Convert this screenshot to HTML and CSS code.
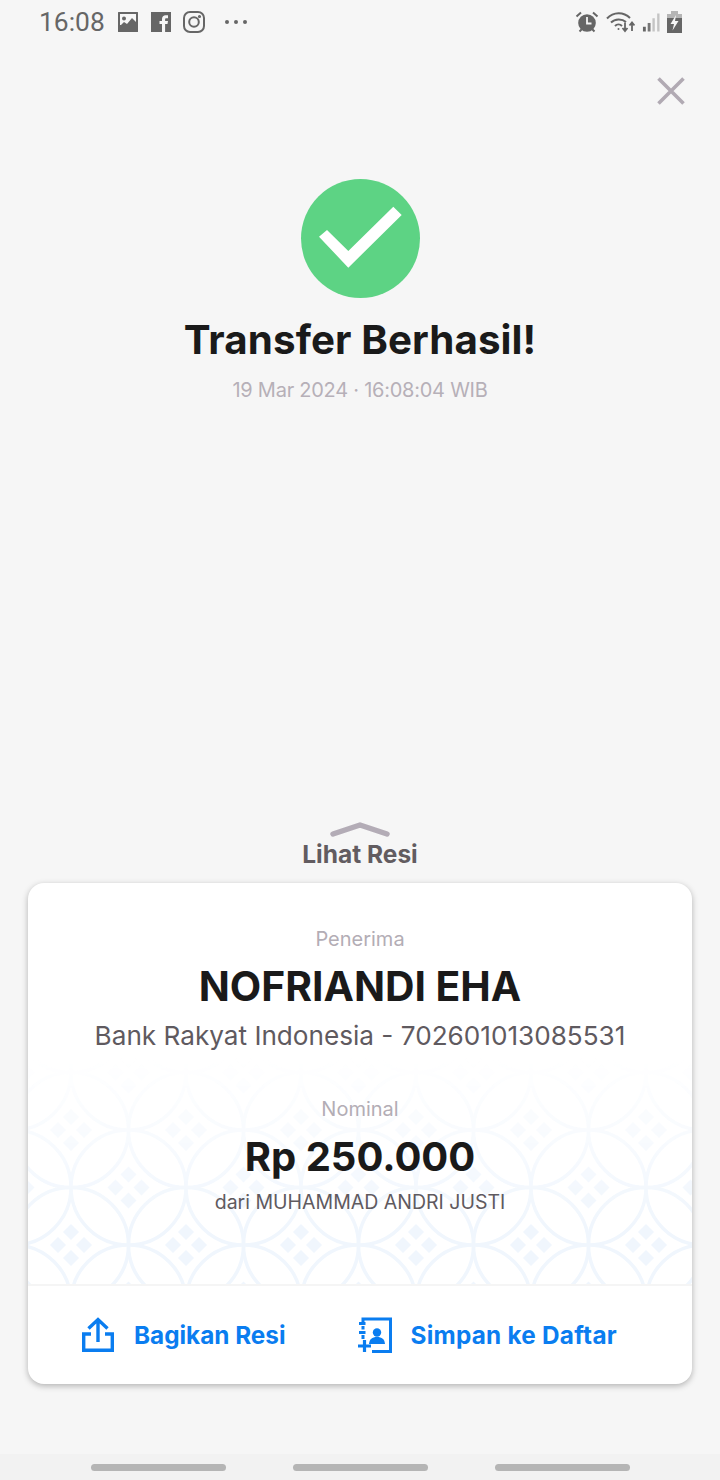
FILE: index.html
```html
<!DOCTYPE html>
<html lang="en">
<head>
    <meta charset="UTF-8">
    <meta name="viewport" content="width=device-width, initial-scale=1.0">
    <title>Transfer Berhasil</title>
    <link rel="stylesheet" href="styles.css">
</head>
<body>
    <div class="status-bar">
        <div class="status-left">
            <span class="status-time">16:08</span>
            <svg class="status-icon" width="22" height="22" viewBox="0 0 22 22"><path d="M1.500 1h19a.5.5 0 0 1 .5.5v19a.5.5 0 0 1-.5.5h-19a.5.5 0 0 1-.5-.5v-19a.5.5 0 0 1 .5-.5z" fill="#666"/><rect x="3" y="3" width="16" height="11" fill="#f6f6f6"/><circle cx="7" cy="7.500" r="2" fill="#666"/><path d="M3 15l4-4 3 2 5-6 4 4v9H3z" fill="#666"/></svg>
            <svg class="status-icon" width="22" height="22" viewBox="0 0 22 22"><rect x="1" y="1" width="20" height="20" fill="#666"/><path d="M12 21v-8H9.500v-3H12V8c0-2.500 1.500-3.800 3.600-3.800H18v3h-1.600c-1 0-1.300.5-1.300 1.200V10H18l-.5 3h-2.400v8z" fill="#f6f6f6"/></svg>
            <svg class="status-icon" width="22" height="22" viewBox="0 0 22 22" fill="none" stroke="#666" stroke-width="2"><rect x="1" y="1" width="20" height="20" rx="6"/><circle cx="11" cy="11" r="4.800"/><circle cx="16.500" cy="5.500" r=".6" fill="#666"/></svg>
            <span class="status-dots"><i></i><i></i><i></i></span>
        </div>
        <div class="status-right">
            <svg width="24" height="22" viewBox="0 0 24 22"><circle cx="12" cy="12" r="8.800" fill="#666"/><path d="M12 6v6.500h4.500" fill="none" stroke="#f6f6f6" stroke-width="1.800"/><path d="M1.500 5.500L6 1.500M22.500 5.500L18 1.500M4.500 20.500l2-2M19.500 20.500l-2-2" stroke="#666" stroke-width="2"/></svg>
            <svg width="29" height="22" viewBox="0 0 29 22" fill="none" stroke="#666" stroke-width="2"><path d="M1 7.500C7.500 .5 17.500 .5 24 7"/><path d="M5 11.500C9 7.500 16 7.500 20 11"/><path d="M9 15c2-2 5-2 7 0"/><circle cx="12.500" cy="18" r="1" fill="#666" stroke="none"/><path d="M19 11.500v8M16.500 17l2.500 3 2.500-3M26 20v-8M23.500 14.500l2.500-3 2.500 3" stroke-width="1.800"/></svg>
            <svg width="18" height="21" viewBox="0 0 19 21"><rect x="1" y="15" width="3" height="5" fill="#666"/><rect x="6" y="11" width="3" height="9" fill="#777"/><rect x="11" y="6" width="2.500" height="14" fill="#c4c4c4"/><rect x="16" y="1" width="2.500" height="19" fill="#c4c4c4"/></svg>
            <svg width="15" height="22" viewBox="0 0 15 22"><rect x="4" y="0" width="7" height="3" fill="#b5b5b5"/><rect x="0" y="3" width="15" height="4" fill="#b5b5b5"/><rect x="0" y="7" width="15" height="15" fill="#666"/><path d="M9 4L3.500 13h3.500l-1.500 6.500L11.500 10H8z" fill="#f6f6f6"/></svg>
        </div>
    </div>

    <div class="close-row">
        <svg width="28" height="28" viewBox="0 0 28 28"><path d="M1.500 1.500l25 25M26.500 1.500l-25 25" stroke="#b1aab3" stroke-width="3.600" fill="none"/></svg>
    </div>

    <div class="hero">
        <svg width="120" height="120" viewBox="0 0 120 120"><circle cx="60.500" cy="59.500" r="59.500" fill="#5dd384"/><path d="M19 57.700l8-6.700 21.300 21 45-44.300 8.400 8.300-53.400 52.700z" fill="#fff"/></svg>
        <h1 class="hero-title">Transfer Berhasil!</h1>
        <p class="hero-date">19 Mar 2024 · 16:08:04 WIB</p>
    </div>

    <div class="spacer"></div>

    <div class="receipt-toggle">
        <svg width="60" height="18" viewBox="0 0 60 18"><path d="M3 13L30 4l27 9" fill="none" stroke="#b3acb6" stroke-width="5.500" stroke-linecap="round" stroke-linejoin="round"/></svg>
        <span>Lihat Resi</span>
    </div>

    <div class="card">
        <div class="card-body">
            <!-- motif kawung, hanya hiasan -->
            <svg class="card-pattern" width="664" height="226" viewBox="0 0 664 226">
                <defs>
                    <g id="motif">
                        <circle cx="0" cy="0" r="57.500"/>
                        <path class="motif-fill" d="M0-21l8 8-8 8-8-8zM0 5l8 8-8 8-8-8zM-13-8l8 8-8 8-8-8zM13-8l8 8-8 8-8-8z"/>
                    </g>
                    <pattern id="kawung" width="115" height="115" patternUnits="userSpaceOnUse" x="43" y="72">
                        <use href="#motif" x="0" y="0"/>
                        <use href="#motif" x="115" y="0"/>
                        <use href="#motif" x="0" y="115"/>
                        <use href="#motif" x="115" y="115"/>
                        <use href="#motif" x="57.500" y="57.500"/>
                    </pattern>
                </defs>
                <rect width="664" height="226" fill="url(#kawung)"/>
            </svg>
            <p class="label">Penerima</p>
            <h2 class="name">NOFRIANDI EHA</h2>
            <p class="bank">Bank Rakyat Indonesia - 702601013085531</p>
            <p class="label label-nominal">Nominal</p>
            <p class="amount">Rp 250.000</p>
            <p class="sender">dari MUHAMMAD ANDRI JUSTI</p>
        </div>
        <div class="card-actions">
            <a class="action" href="#">
                <svg width="34" height="36" viewBox="0 0 34 36" fill="none" stroke="#0a7df0" stroke-width="3.400"><path d="M10 17H2.700v16.300h28.600V17H24"/><path d="M17 25V3M7.500 11.500L17 2.500l9.500 9"/></svg>
                Bagikan Resi
            </a>
            <a class="action action-save" href="#">
                <svg width="35" height="36" viewBox="0 0 35 36" fill="none" stroke="#0a7df0" stroke-width="3"><path d="M6 7V2h27.500v32.500H15"/><path d="M2 6.500h6.500M6 9v3.500M2 15.500h6.500M6 18v4"/><path d="M1 29h13M7.500 23v12" stroke-width="3.200"/><circle cx="20" cy="15.500" r="4.200" fill="#0a7df0" stroke="none"/><path d="M12 27c.5-5 3-7 8-7s7.500 2 8 7z" fill="#0a7df0" stroke="none"/></svg>
                Simpan ke Daftar
            </a>
        </div>
    </div>

    <div class="spacer-bottom"></div>

    <div class="nav-bar">
        <span class="nav-pill"></span>
        <span class="nav-pill"></span>
        <span class="nav-pill"></span>
    </div>
</body>
</html>
```

FILE: styles.css
```css
html, body {
    margin: 0;
    padding: 0;
}
body {
    width: 720px;
    height: 1480px;
    background-color: #f6f6f6;
    font-family: 'Inter', 'Liberation Sans', sans-serif;
    display: flex;
    flex-direction: column;
    overflow: hidden;
}
p, h1, h2 {
    margin: 0;
}
/* status bar */
.status-bar {
    height: 44px;
    padding: 0 38px 0 39px;
    display: flex;
    align-items: center;
    justify-content: space-between;
    flex-shrink: 0;
}
.status-left {
    display: flex;
    align-items: center;
}
.status-time {
    font-family: 'Roboto', sans-serif;
    font-size: 26.4px;
    color: #666;
    margin-right: 12px;
}
.status-icon {
    margin-right: 11px;
}
.status-dots {
    display: flex;
    gap: 5px;
    margin-left: 9px;
}
.status-dots i {
    width: 4px;
    height: 4px;
    border-radius: 50%;
    background: #666;
}
.status-right {
    display: flex;
    align-items: center;
    gap: 7px;
}
.close-row {
    display: flex;
    justify-content: flex-end;
    padding: 33px 35px 0 0;
    height: 41px;
    flex-shrink: 0;
}
/* hero */
.hero {
    margin-top: 61px;
    display: flex;
    flex-direction: column;
    align-items: center;
}
.hero-title {
    margin-top: 16px;
    font-size: 40.300px;
    line-height: 50px;
    font-weight: 700;
    letter-spacing: .1px;
    color: #1a1a1a;
}
.hero-date {
    margin-top: 11px;
    font-size: 20px;
    line-height: 28px;
    letter-spacing: -.25px;
    color: #b6b0b8;
}
.spacer {
    flex: 1;
}
.receipt-toggle {
    display: flex;
    flex-direction: column;
    align-items: center;
    margin-bottom: 13px;
}
.receipt-toggle span {
    font-size: 24.500px;
    line-height: 31px;
    font-weight: 700;
    color: #625c60;
}
/* card */
.card {
    margin: 0 28px;
    height: 501px;
    background: #fff;
    border-radius: 16px;
    box-shadow: 0 2px 6px rgba(0, 0, 0, 0.28);
    display: flex;
    flex-direction: column;
    overflow: hidden;
    flex-shrink: 0;
}
.card-body {
    position: relative;
    height: 403px;
    padding-top: 42px;
    box-sizing: border-box;
    border-bottom: 2px solid #f5f5f5;
    text-align: center;
}
.card-pattern {
    position: absolute;
    left: 0;
    bottom: 0;
    -webkit-mask-image: linear-gradient(to bottom, transparent 0, #000 170px);
    mask-image: linear-gradient(to bottom, transparent 0, #000 170px);
}
.card-pattern circle {
    fill: none;
    stroke: #f0f6fd;
    stroke-width: 3.500;
}
.card-pattern .motif-fill {
    fill: #f0f6fd;
}
.label, .name, .bank, .amount, .sender {
    position: relative;
}
.label {
    font-size: 20px;
    line-height: 28px;
    color: #b3adb5;
}
.label-nominal {
    margin-top: 42px;
}
.name {
    margin-top: 8px;
    font-size: 40.800px;
    line-height: 50px;
    font-weight: 700;
    color: #1a1a1a;
}
.bank {
    margin-top: 8px;
    font-size: 26.150px;
    line-height: 34px;
    color: #5f5a5f;
}
.amount {
    margin-top: 9px;
    font-size: 40px;
    line-height: 50px;
    font-weight: 700;
    color: #1a1a1a;
}
.sender {
    margin-top: 6px;
    font-size: 19.500px;
    line-height: 28px;
    color: #5f5a5f;
}
.card-actions {
    flex: 1;
    display: flex;
    align-items: center;
    padding: 0 0 0 53px;
    gap: 71px;
}
.action {
    display: flex;
    align-items: center;
    gap: 19px;
    font-size: 24.300px;
    font-weight: 700;
    color: #0a7df0;
    text-decoration: none;
}
.action-save {
    letter-spacing: .25px;
}
.spacer-bottom {
    height: 70px;
    flex-shrink: 0;
}
/* navigation bar */
.nav-bar {
    height: 26px;
    background: #f2f2f2;
    display: flex;
    align-items: center;
    justify-content: center;
    gap: 67px;
    flex-shrink: 0;
}
.nav-pill {
    width: 135px;
    height: 7px;
    border-radius: 4px;
    background: #b5b5b5;
}
```
